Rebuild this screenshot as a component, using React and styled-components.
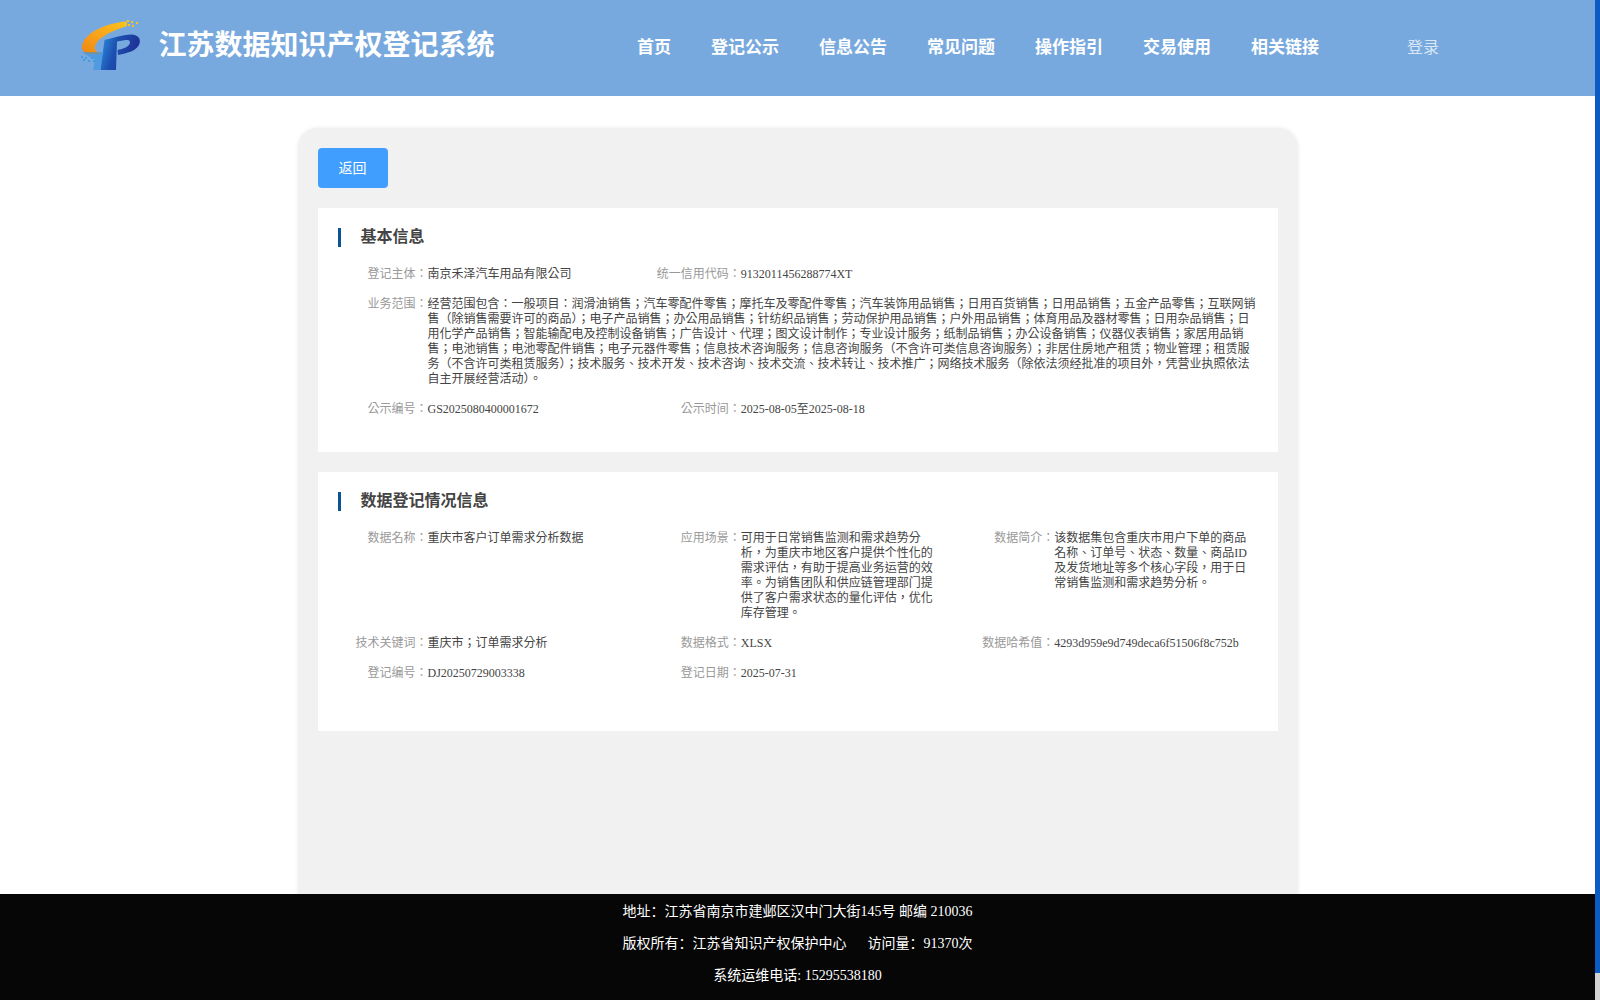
import React from "react";
import styled, { createGlobalStyle } from "styled-components";

const Global = createGlobalStyle`
  html::-webkit-scrollbar { display: none; }
  body {
    margin: 0;
    padding-right: 5px;
    background: #fff;
    font-family: "Liberation Serif", "Noto Sans CJK TC", serif;
  }
`;

const ScrollTrack = styled.div`
  position: fixed;
  top: 0;
  right: 0;
  bottom: 0;
  width: 5px;
  background: #d2d2d2;
`;
const ScrollThumb = styled.div`
  height: 973px;
  background: #0a5cc2;
`;
const Header = styled.header`
  display: flex;
  align-items: center;
  height: 96px;
  padding-left: 70px;
  background: #78a9de;
  color: #fff;
`;
const Brand = styled.div`
  display: flex;
  align-items: center;
  gap: 8.5px;
  width: 567px;
  padding-bottom: 6px;
  flex: none;
`;
const BrandTitle = styled.h1`
  margin: 2px 0 0;
  font-family: "Liberation Serif", "Noto Sans CJK SC", serif;
  font-size: 28px;
  line-height: 40px;
  font-weight: 700;
  white-space: nowrap;
`;
const Nav = styled.nav`
  display: flex;
  gap: 40px;
`;
const NavItem = styled.a`
  font-family: "Liberation Serif", "Noto Sans CJK SC", serif;
  font-size: 17px;
  font-weight: 700;
  line-height: 24px;
  white-space: nowrap;
`;
const Login = styled.a`
  margin-left: 88px;
  font-family: "Liberation Serif", "Noto Sans CJK SC", serif;
  font-size: 16px;
  line-height: 24px;
  color: rgba(255, 255, 255, 0.72);
`;
const Main = styled.main`
  padding: 32px 0 0;
`;
const Panel = styled.div`
  box-sizing: border-box;
  width: 1000px;
  height: 900px;
  margin: 0 auto;
  padding: 20px;
  background: #f1f1f1;
  border-radius: 20px 20px 0 0;
  box-shadow: 0 0 4px rgba(0, 0, 0, 0.08);
`;
const BackButton = styled.button`
  display: block;
  width: 70px;
  height: 40px;
  padding: 0 0 3px;
  border: 0;
  border-radius: 4px;
  background: #409eff;
  color: #fff;
  font-family: "Noto Sans CJK SC", sans-serif;
  font-size: 14px;
`;
const Section = styled.section`
  box-sizing: border-box;
  height: ${(p) => p.$height}px;
  margin-top: 20px;
  padding: 20px 20px 0 0;
  background: #fff;
`;
const SectionTitle = styled.h2`
  height: 19px;
  margin: 0 0 20px 20px;
  padding-left: 20px;
  border-left: 3px solid #0b5394;
  font-family: "Liberation Serif", "Noto Sans CJK SC", serif;
  font-size: 16px;
  line-height: 18px;
  font-weight: 700;
  color: #444;
`;
const Grid = styled.div`
  display: grid;
  grid-template-columns: repeat(3, 1fr);
  row-gap: 15px;
`;
const Field = styled.div`
  display: flex;
  grid-column: span ${(p) => p.$span || 1};
  min-width: 0;
  font-size: 12px;
  line-height: 15px;
`;
const Label = styled.span`
  flex: none;
  width: 110px;
  text-align: right;
  color: #999;
`;
const Value = styled.span`
  flex: 1;
  min-width: 0;
  color: #444;
`;
const Footer = styled.footer`
  position: fixed;
  left: 0;
  right: 5px;
  bottom: 0;
  box-sizing: border-box;
  height: 106px;
  padding-top: 2px;
  background: #060606;
  color: #fff;
  font-family: "Liberation Serif", "Noto Sans CJK SC", serif;
  font-size: 14px;
  line-height: 32px;
  text-align: center;
  white-space: pre;
`;
const FooterLine = styled.div``;

const Logo = () => (
  <svg width="80" height="70" viewBox="70 10 80 70" style={{ flex: "none", display: "block" }}>
    <defs>
      <linearGradient id="sw" x1="1" y1="0" x2="0" y2="1">
        <stop offset="0" stopColor="#fcc419" />
        <stop offset="0.55" stopColor="#f7a21c" />
        <stop offset="1" stopColor="#ef860f" />
      </linearGradient>
      <linearGradient id="pb" x1="0" y1="0" x2="1" y2="0.3">
        <stop offset="0" stopColor="#2f8fe0" />
        <stop offset="0.45" stopColor="#1c50b0" />
        <stop offset="1" stopColor="#1f2f95" />
      </linearGradient>
    </defs>
    <path d="M127 21.500C108 23 87 31 82.500 44c-2 5 1 9 6 9.500l13 .5c-5-2-7.500-4-6.500-8 2-7 13-14 32-20z" fill="url(#sw)" />
    <path d="M104.500 40 116 37c9-2 16-3.500 20-1.500 4.500 2 5 7 2 11-3.500 4.500-10 6.500-20 8.500l-.5-5c5-1 10-2.500 12-6 1.500-3-.5-4.500-4-4l-8.500 1.500-1 28.500H100.500z" fill="url(#pb)" />
    <path d="M104 52H82l8 5 5 3-2 10h7z" fill="#2f8fe0" opacity=".55" />
    <g fill="#fcc419">
      <rect x="127" y="20" width="2" height="2" />
      <rect x="131" y="21" width="2" height="2" />
      <rect x="128" y="24" width="2" height="2" />
      <rect x="132" y="25" width="2" height="2" />
      <rect x="136" y="22" width="2" height="2" />
    </g>
    <g fill="#3f9be6">
      <rect x="81" y="56" width="2" height="2" />
      <rect x="85" y="57" width="2" height="2" />
      <rect x="83" y="59" width="2" height="2" />
      <rect x="88" y="60" width="2" height="2" />
      <rect x="91" y="57" width="2" height="2" />
      <rect x="93" y="60" width="2" height="2" />
    </g>
  </svg>
);

const navItems = ["首页", "登记公示", "信息公告", "常见问题", "操作指引", "交易使用", "相关链接"];

const scope =
  "经营范围包含：一般项目：润滑油销售；汽车零配件零售；摩托车及零配件零售；汽车装饰用品销售；日用百货销售；日用品销售；五金产品零售；互联网销售（除销售需要许可的商品）；电子产品销售；办公用品销售；针纺织品销售；劳动保护用品销售；户外用品销售；体育用品及器材零售；日用杂品销售；日用化学产品销售；智能输配电及控制设备销售；广告设计、代理；图文设计制作；专业设计服务；纸制品销售；办公设备销售；仪器仪表销售；家居用品销售；电池销售；电池零配件销售；电子元器件零售；信息技术咨询服务；信息咨询服务（不含许可类信息咨询服务）；非居住房地产租赁；物业管理；租赁服务（不含许可类租赁服务）；技术服务、技术开发、技术咨询、技术交流、技术转让、技术推广；网络技术服务（除依法须经批准的项目外，凭营业执照依法自主开展经营活动）。";

const Item = ({ label, children, span }) => (
  <Field $span={span}>
    <Label>{label}：</Label>
    <Value>{children}</Value>
  </Field>
);

export default function App() {
  return (
    <>
      <Global />
      <Header>
        <Brand>
          <Logo />
          <BrandTitle>江苏数据知识产权登记系统</BrandTitle>
        </Brand>
        <Nav>
          {navItems.map((n) => (
            <NavItem key={n}>{n}</NavItem>
          ))}
        </Nav>
        <Login>登录</Login>
      </Header>
      <Main>
        <Panel>
          <BackButton>返回</BackButton>
          <Section $height={244}>
            <SectionTitle>基本信息</SectionTitle>
            <Grid>
              <Item label="登记主体">南京禾泽汽车用品有限公司</Item>
              <Item label="统一信用代码" span={2}>9132011456288774XT</Item>
              <Item label="业务范围" span={3}>{scope}</Item>
              <Item label="公示编号">GS2025080400001672</Item>
              <Item label="公示时间" span={2}>2025-08-05至2025-08-18</Item>
            </Grid>
          </Section>
          <Section $height={259}>
            <SectionTitle>数据登记情况信息</SectionTitle>
            <Grid>
              <Item label="数据名称">重庆市客户订单需求分析数据</Item>
              <Item label="应用场景">
                可用于日常销售监测和需求趋势分析，为重庆市地区客户提供个性化的需求评估，有助于提高业务运营的效率。为销售团队和供应链管理部门提供了客户需求状态的量化评估，优化库存管理。
              </Item>
              <Item label="数据简介">
                该数据集包含重庆市用户下单的商品名称、订单号、状态、数量、商品ID及发货地址等多个核心字段，用于日常销售监测和需求趋势分析。
              </Item>
              <Item label="技术关键词">重庆市；订单需求分析</Item>
              <Item label="数据格式">XLSX</Item>
              <Item label="数据哈希值">4293d959e9d749deca6f51506f8c752b</Item>
              <Item label="登记编号">DJ20250729003338</Item>
              <Item label="登记日期" span={2}>2025-07-31</Item>
            </Grid>
          </Section>
        </Panel>
      </Main>
      <Footer>
        <FooterLine>地址：江苏省南京市建邺区汉中门大街145号 邮编 210036</FooterLine>
        <FooterLine>版权所有：江苏省知识产权保护中心      访问量：91370次</FooterLine>
        <FooterLine>系统运维电话: 15295538180</FooterLine>
      </Footer>
      <ScrollTrack>
        <ScrollThumb />
      </ScrollTrack>
    </>
  );
}
